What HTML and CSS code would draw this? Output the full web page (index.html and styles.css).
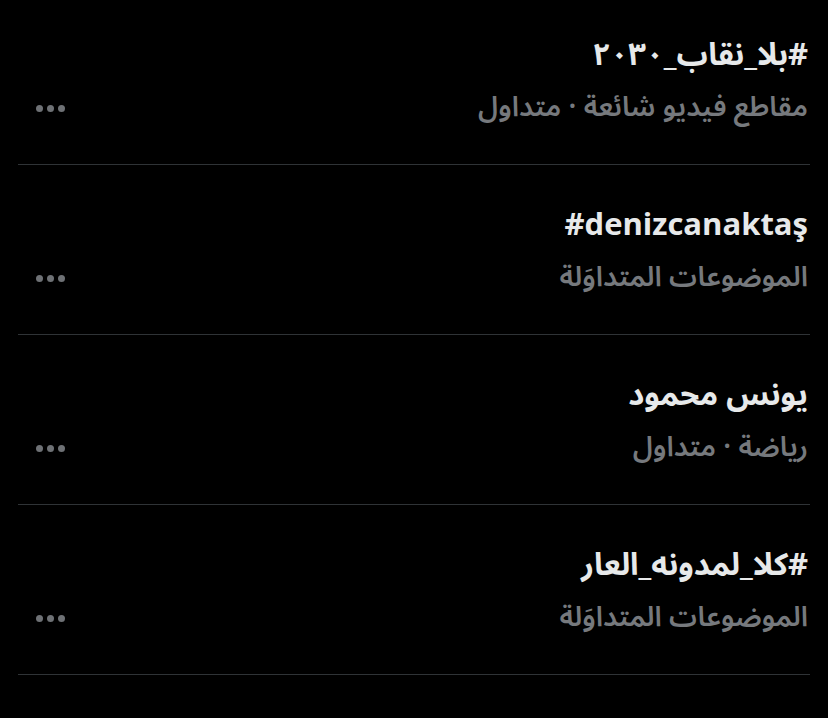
FILE: index.html
```html
<!DOCTYPE html>
<html lang="ar" dir="rtl">
<head>
<meta charset="utf-8">
<link rel="stylesheet" href="styles.css">
</head>
<body>
<div class="list">
  <div class="row first">
    <div class="title">#بلا_نقاب_٢٠٣٠</div>
    <div class="meta">
      <span class="sub">مقاطع فيديو شائعة · متداول</span>
      <span class="more"><i></i><i></i><i></i></span>
    </div>
  </div>
  <div class="row">
    <div class="title"><span dir="ltr">#denizcanaktaş</span></div>
    <div class="meta">
      <span class="sub">الموضوعات المتداوَلة</span>
      <span class="more"><i></i><i></i><i></i></span>
    </div>
  </div>
  <div class="row">
    <div class="title">يونس محمود</div>
    <div class="meta">
      <span class="sub">رياضة · متداول</span>
      <span class="more"><i></i><i></i><i></i></span>
    </div>
  </div>
  <div class="row">
    <div class="title">#كلا_لمدونه_العار</div>
    <div class="meta">
      <span class="sub">الموضوعات المتداوَلة</span>
      <span class="more"><i></i><i></i><i></i></span>
    </div>
  </div>
</div>
</body>
</html>
```
FILE: styles.css
```css
html, body {
  margin: 0;
  padding: 0;
  background: #000;
  height: 100%;
  overflow: hidden;
}
body {
  font-family: "Noto Sans Arabic", "Noto Sans", "DejaVu Sans", sans-serif;
  color: #e7e9ea;
}
.list {
  margin-left: 18px;
  margin-right: 18px;
}
.row {
  height: 170px;
  box-sizing: border-box;
  border-bottom: 1px solid #2f3336;
  padding-top: 35px;
  padding-right: 2px;
}
.row.first {
  margin-top: -5px;
}
.title {
  font-size: 31px;
  font-weight: 700;
  line-height: 50px;
  height: 50px;
  color: #e7e9ea;
  white-space: nowrap;
}
.meta {
  display: flex;
  justify-content: space-between;
  align-items: center;
  margin-top: 5px;
  height: 46px;
}
.sub {
  font-size: 28px;
  font-weight: 600;
  line-height: 46px;
  color: #76797d;
  white-space: nowrap;
}
.more {
  display: flex;
  gap: 4px;
  margin-left: 18px;
  direction: ltr;
}
.more i {
  width: 7px;
  height: 7px;
  border-radius: 50%;
  background: #6e7175;
}
```
